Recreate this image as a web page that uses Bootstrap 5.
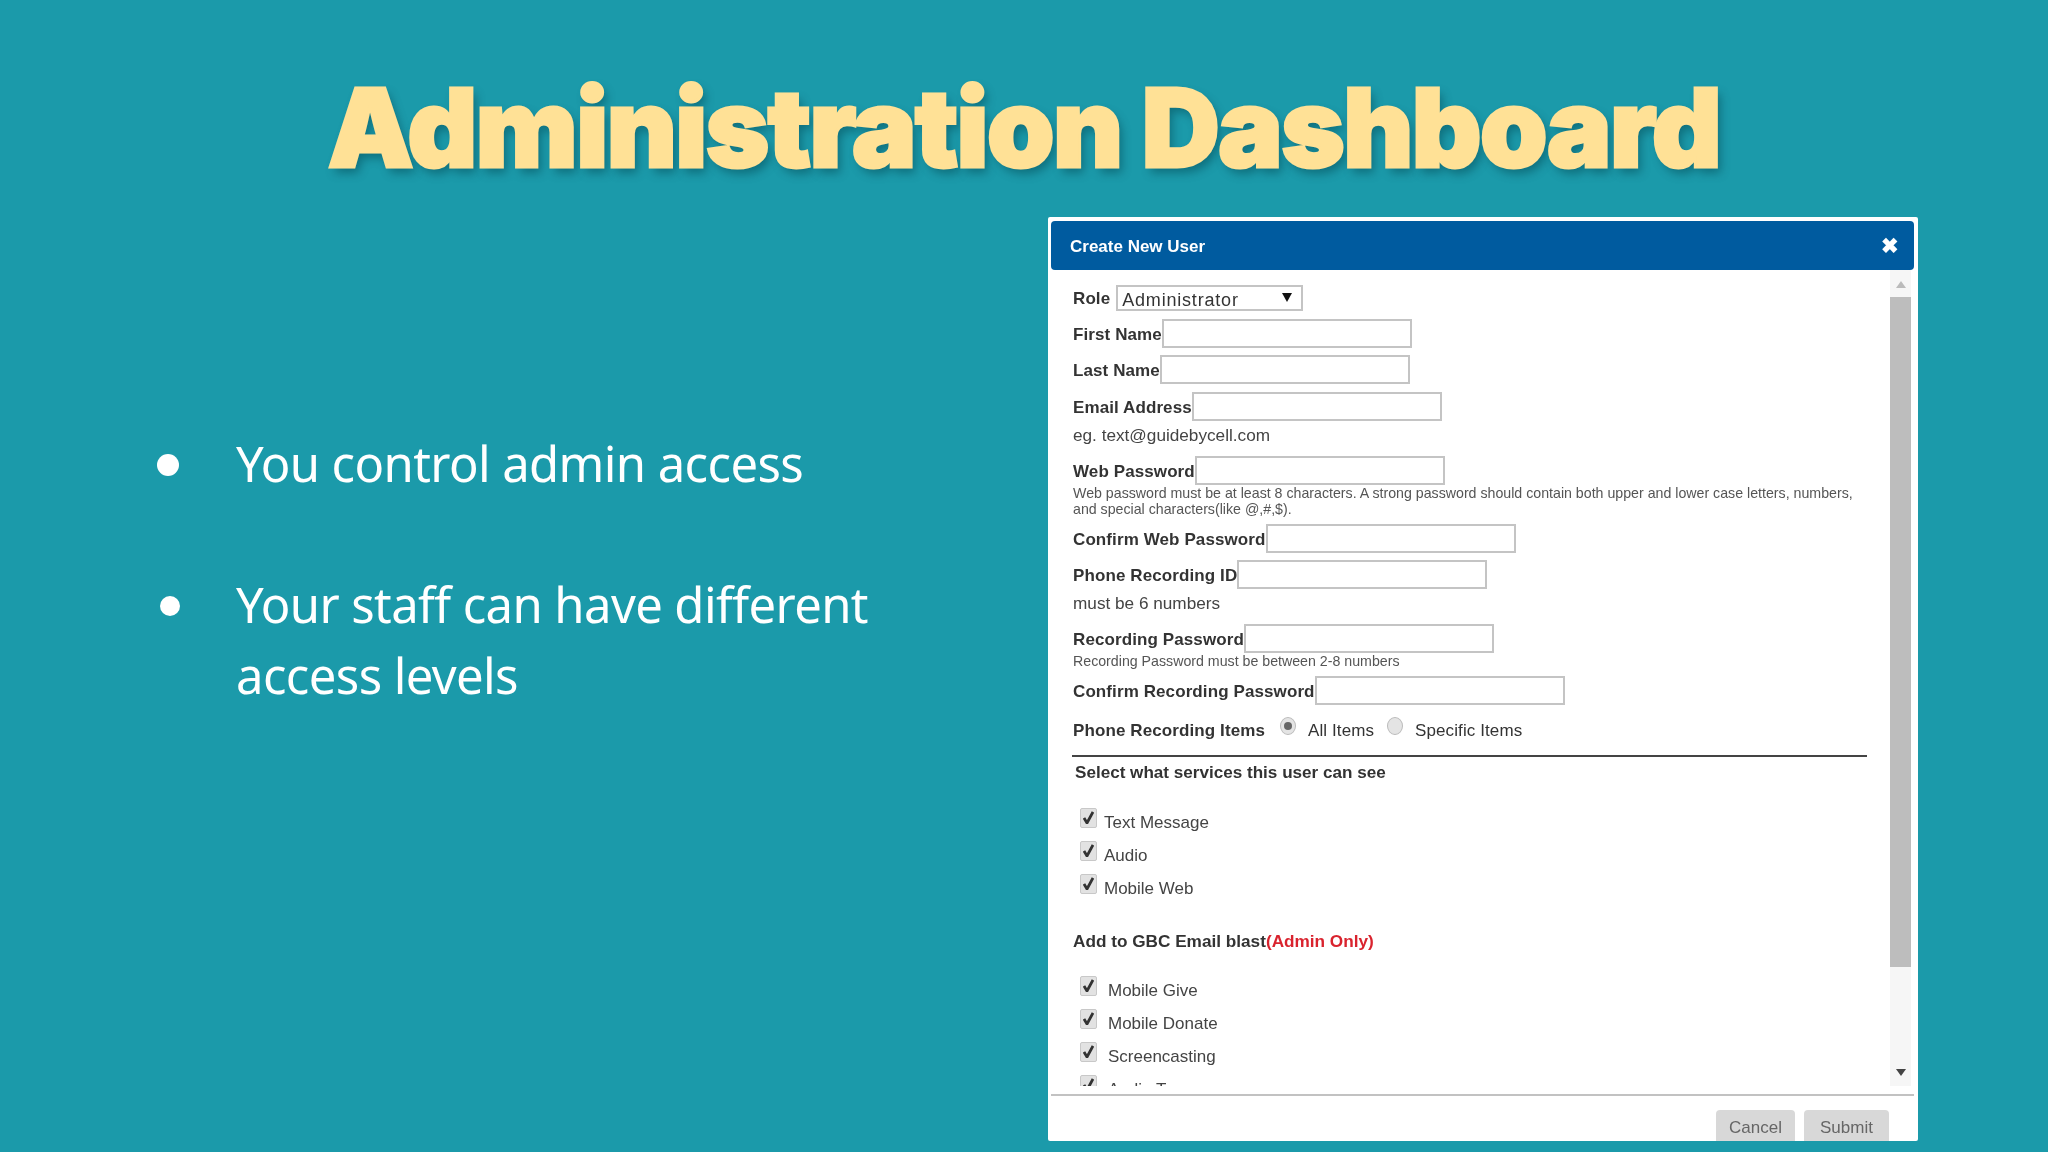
<!DOCTYPE html>
<html lang="en">
<head>
<meta charset="utf-8">
<title>Administration Dashboard</title>
<link href="https://cdn.jsdelivr.net/npm/bootstrap@5.3.0/dist/css/bootstrap.min.css" rel="stylesheet">
<style>
html,body{height:100%}
body{width:2048px;height:1152px;overflow:hidden;background:#1b9aaa;margin:0}
.slide-head{height:217px;padding-top:63px}
.slide-title{margin:0;font-family:Inter,"Liberation Sans",sans-serif;font-weight:900;font-size:108px;line-height:130px;letter-spacing:-1.5px;color:#ffe196;-webkit-text-stroke:3px #ffe196;text-shadow:4px 6px 10px rgba(0,60,70,.45);text-align:center}
.slide-main{height:935px}
.bullets{width:1048px;padding-top:211px;padding-left:157px;font-family:"Noto Sans",sans-serif;font-size:49px;line-height:71px;color:#fff;letter-spacing:-.6px}
.bullet-row{display:flex;align-items:flex-start;margin-bottom:70px}
.bullet-row:last-child{margin-bottom:0}
.bullet-dot{flex:0 0 22px;width:22px;height:22px;border-radius:50%;background:#fff;margin-top:26px;margin-right:57px}
.bullet-dot.alt{flex-basis:20px;width:20px;height:20px;margin-left:3px;margin-right:56px;margin-top:27px}
.bullet-text{width:650px}
.dialog-box{width:870px;height:924px;padding:4px 4px 0 3px;border:0;border-radius:2px;background:#fff;overflow:hidden;font-family:"Liberation Sans",Arial,sans-serif;color:#333;filter:blur(.4px)}
.dialog-head{height:49px;flex:0 0 49px;padding:2px 15px 0 19px;background:#005b9f;border:0;border-radius:4px;color:#fff;font-size:17px;font-weight:700}
.dialog-close{font-size:21px;line-height:1;font-weight:700;color:#fff;margin-top:-2px}
.dialog-mid{flex:0 0 816px;height:816px;overflow:hidden}
.form-pane{flex:1 1 auto;height:816px;overflow:hidden;padding:15px 30px 0 22px;font-size:17px;letter-spacing:.1px}
.scroll-rail{flex:0 0 21px;width:21px;height:816px;margin-right:3px;background:#f6f6f6;display:flex;flex-direction:column;align-items:center}
.scroll-thumb{width:21px;height:670px;background:#bdbdbd;margin-top:9px}
.rail-up,.rail-down{width:0;height:0;border-left:5px solid transparent;border-right:5px solid transparent}
.rail-up{border-bottom:7px solid #bbb;margin-top:11px}
.rail-down{border-top:7px solid #444;margin-top:102px}
.fld-row{display:flex;align-items:center;margin-top:7.5px;height:29px;padding-top:3px;font-weight:700}
.fld-row.first{margin-top:0;height:26px;font-weight:700;padding-top:1px}
.fld-row.tight{margin-top:6.5px}
.fld-row.after-note{margin-top:5px}
.fld-input{width:250px;height:29px;margin-top:-3px;border:2px solid #c4c4c4;background:#fff;padding:0;border-radius:0}
.role-select{appearance:none;-webkit-appearance:none;width:187px;height:26px;margin-left:6px;margin-top:-1px;border:2px solid #c4c4c4;border-radius:0;padding:0 0 3px 4px;font-family:"Liberation Sans",sans-serif;font-size:18px;letter-spacing:.8px;font-weight:400;color:#333;background:#fff url("data:image/svg+xml,%3Csvg xmlns='http://www.w3.org/2000/svg' width='10' height='10'%3E%3Cpath d='M0 1h10L5 10z' fill='%23111'/%3E%3C/svg%3E") no-repeat right 9px top 5px}
.note-row{height:30px;display:flex;align-items:center;font-size:17.2px;letter-spacing:0;color:#444}
.note-small{font-size:14.2px;letter-spacing:0;line-height:16px;color:#555}
.items-row{display:flex;align-items:center;height:36px;margin-top:7px;padding-top:2px;font-size:17px}
.items-row strong{font-weight:700}
.radio-dot{width:16px;height:18px;margin:0 0 10px 15px;flex:0 0 16px;border-radius:50%;border:1px solid #bbb;background:#e4e4e4;display:flex;align-items:center;justify-content:center}
.radio-dot.later{margin-left:13px}
.radio-dot i{display:block;width:8px;height:8px;border-radius:50%;background:#666}
.rad-lbl{margin-left:12px}
.rule-line{height:2px;margin:7px 0 0 -1px;background:#444;opacity:1;border:0;width:795px}
.sec-label{font-weight:700;line-height:16px;font-size:17.1px;letter-spacing:0;margin-top:8px;margin-left:2px}
.sec-label.gbc{margin:28px 0 0;font-size:17.2px}
.alert-red{color:#d9232e}
.chk-list{margin-top:25px}
.chk-row{height:33px;display:flex;align-items:center;padding-top:1px;font-size:17px;letter-spacing:0;color:#444}
.chk-box{flex:0 0 17px;width:17px;height:20px;margin:0 0 11px 7px;border:1px solid #c8c8c8;border-radius:2px;background:#e2e2e2;display:flex;align-items:center;justify-content:center}
.chk-lbl{margin-left:7px}
.chk-lbl.wide{margin-left:11px}
.dialog-foot{height:55px;flex:0 0 55px;margin:8px 0 0;padding:14px 25px 0 0;border-top:2px solid #c2c2c2;gap:9px;align-items:flex-start;justify-content:flex-end;border-radius:0;flex-wrap:nowrap}
.foot-btn{margin:0;height:36px;width:79px;padding:0;background:#d8d8d8;border:0;border-radius:4px;color:#666;font-size:17px;line-height:36px}
.foot-btn.wider{width:85px}
</style>
</head>
<body>
<header class="slide-head"><h1 class="slide-title">Administration Dashboard</h1></header>
<main class="slide-main d-flex align-items-start">
  <section class="bullets">
    <div class="bullet-row"><span class="bullet-dot"></span><span class="bullet-text">You control admin access</span></div>
    <div class="bullet-row"><span class="bullet-dot alt"></span><span class="bullet-text">Your staff can have different access levels</span></div>
  </section>
  <section class="modal-content dialog-box">
    <div class="modal-header dialog-head"><span>Create New User</span><span class="dialog-close">✖</span></div>
    <div class="dialog-mid d-flex">
      <div class="form-pane">
        <div class="fld-row first">Role<select class="role-select"><option>Administrator</option></select></div>
        <div class="fld-row">First Name<input class="fld-input" type="text"></div>
        <div class="fld-row">Last Name<input class="fld-input" type="text"></div>
        <div class="fld-row">Email Address<input class="fld-input" type="text"></div>
        <div class="note-row">eg. text@guidebycell.com</div>
        <div class="fld-row after-note">Web Password<input class="fld-input" type="text"></div>
        <div class="note-small">Web password must be at least 8 characters. A strong password should contain both upper and lower case letters, numbers, and special characters(like @,#,$).</div>
        <div class="fld-row">Confirm Web Password<input class="fld-input" type="text"></div>
        <div class="fld-row tight">Phone Recording ID<input class="fld-input" type="text"></div>
        <div class="note-row">must be 6 numbers</div>
        <div class="fld-row after-note">Recording Password<input class="fld-input" type="text"></div>
        <div class="note-small">Recording Password must be between 2-8 numbers</div>
        <div class="fld-row">Confirm Recording Password<input class="fld-input" type="text"></div>
        <div class="items-row"><strong>Phone Recording Items</strong><span class="radio-dot"><i></i></span><span class="rad-lbl">All Items</span><span class="radio-dot later"></span><span class="rad-lbl">Specific Items</span></div>
        <hr class="rule-line">
        <div class="sec-label">Select what services this user can see</div>
        <div class="chk-list">
          <div class="chk-row"><span class="chk-box"><svg width="11" height="13" viewBox="0 0 11 13"><path d="M1 7l3 5 6-11" fill="none" stroke="#333" stroke-width="2.8"/></svg></span><span class="chk-lbl">Text Message</span></div>
          <div class="chk-row"><span class="chk-box"><svg width="11" height="13" viewBox="0 0 11 13"><path d="M1 7l3 5 6-11" fill="none" stroke="#333" stroke-width="2.8"/></svg></span><span class="chk-lbl">Audio</span></div>
          <div class="chk-row"><span class="chk-box"><svg width="11" height="13" viewBox="0 0 11 13"><path d="M1 7l3 5 6-11" fill="none" stroke="#333" stroke-width="2.8"/></svg></span><span class="chk-lbl">Mobile Web</span></div>
        </div>
        <div class="sec-label gbc">Add to GBC Email blast<span class="alert-red">(Admin Only)</span></div>
        <div class="chk-list">
          <div class="chk-row"><span class="chk-box"><svg width="11" height="13" viewBox="0 0 11 13"><path d="M1 7l3 5 6-11" fill="none" stroke="#333" stroke-width="2.8"/></svg></span><span class="chk-lbl wide">Mobile Give</span></div>
          <div class="chk-row"><span class="chk-box"><svg width="11" height="13" viewBox="0 0 11 13"><path d="M1 7l3 5 6-11" fill="none" stroke="#333" stroke-width="2.8"/></svg></span><span class="chk-lbl wide">Mobile Donate</span></div>
          <div class="chk-row"><span class="chk-box"><svg width="11" height="13" viewBox="0 0 11 13"><path d="M1 7l3 5 6-11" fill="none" stroke="#333" stroke-width="2.8"/></svg></span><span class="chk-lbl wide">Screencasting</span></div>
          <div class="chk-row"><span class="chk-box"><svg width="11" height="13" viewBox="0 0 11 13"><path d="M1 7l3 5 6-11" fill="none" stroke="#333" stroke-width="2.8"/></svg></span><span class="chk-lbl wide">Audio Tours</span></div>
        </div>
      </div>
      <div class="scroll-rail"><span class="rail-up"></span><div class="scroll-thumb"></div><span class="rail-down"></span></div>
    </div>
    <div class="modal-footer dialog-foot"><button type="button" class="btn foot-btn">Cancel</button><button type="button" class="btn foot-btn wider">Submit</button></div>
  </section>
</main>
<script src="https://cdn.jsdelivr.net/npm/bootstrap@5.3.0/dist/js/bootstrap.bundle.min.js"></script>
</body>
</html>
